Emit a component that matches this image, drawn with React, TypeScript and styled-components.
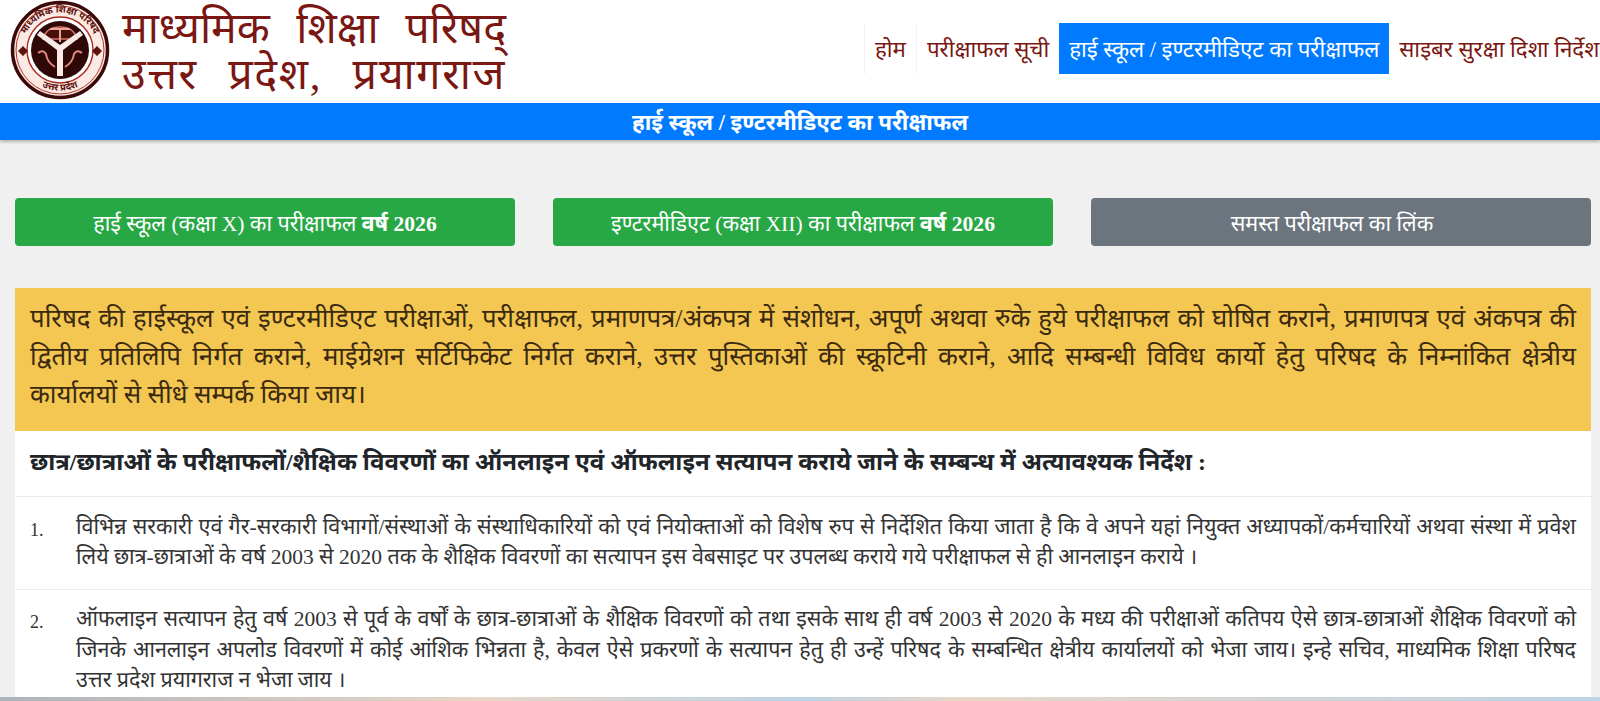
import React from "react";
import styled, { createGlobalStyle } from "styled-components";

const Global = createGlobalStyle`
  html, body { margin: 0; padding: 0; height: 701px; overflow: hidden; background: #f0f0f0; }
  body { font-family: "Liberation Serif", "Noto Sans", "DejaVu Sans", serif; color: #212529; }
  * { box-sizing: border-box; }
`;

const Header = styled.header`
  height: 103px; background: #fff; display: flex; overflow: hidden;
`;
const Brand = styled.div`
  flex: 0 0 864px; display: flex; align-items: flex-start; padding: 0 0 0 10px; gap: 12px;
`;
const BrandText = styled.div`
  color: #7a1712; font-size: 43px; line-height: 46px; padding-top: 6px; width: 384px;
`;
const BrandLine = styled.div<{ $wide?: boolean }>`
  height: 1lh; white-space: nowrap; text-align: justify; text-align-last: justify;
  letter-spacing: ${(p) => (p.$wide ? "1.6px" : "0")};
`;
const Nav = styled.nav`
  flex: none; display: flex; align-items: flex-start; padding-top: 23px; white-space: nowrap;
`;
const NavItem = styled.a<{ $active?: boolean; $divider?: boolean }>`
  display: flex; align-items: center; height: 51px; padding: 0 10px; font-size: 22.3px;
  color: ${(p) => (p.$active ? "#fff" : "#7a1712")};
  background: ${(p) => (p.$active ? "#007bff" : "transparent")};
  border-left: ${(p) => (p.$divider ? "1px solid #f2f2f2" : "none")};
`;
const TitleBar = styled.div`
  height: 37px; background: #007bff; color: #fff; font-weight: 700; font-size: 22.4px;
  display: flex; align-items: center; justify-content: center; box-shadow: 0 2px 3px rgba(0,0,0,.25);
`;
const Buttons = styled.div`
  display: grid; grid-template-columns: repeat(3, 1fr); gap: 38px; padding: 58px 9px 0 15px;
`;
const LinkButton = styled.a<{ $grey?: boolean }>`
  height: 48px; border-radius: 4px; color: #fff; font-size: 21.6px;
  display: flex; align-items: center; justify-content: center; gap: 5px;
  padding-right: ${(p) => (p.$grey ? "18px" : "0")};
  background: ${(p) => (p.$grey ? "#6c757d" : "#28a745")};
`;
const Card = styled.section`
  margin: 42px 9px 0 15px; background: #fff;
`;
const Notice = styled.div`
  background: #f3c752; padding: 12px 15px 0; height: 143px; font-size: 25.8px; line-height: 38px; color: #3b2a10;
`;
const FullLine = styled.span`
  display: block; height: 1lh; white-space: nowrap; text-align: justify; text-align-last: justify;
`;
const LastLine = styled.span`
  display: block; height: 1lh; white-space: nowrap;
`;
const Heading = styled.div`
  padding: 0 15px 6px; height: 65px; display: flex; align-items: center; font-weight: 700; font-size: 24px; color: #212529; white-space: nowrap;
`;
const Item = styled.div`
  display: grid; grid-template-columns: 46px 1fr; padding: 14.5px 15px 16px; border-top: 1px solid #e9ecef;
  font-size: 21.5px; line-height: 30.5px; color: #333;
`;
const Num = styled.span`
  font-size: 18px; padding-top: 3px;
`;
const BottomStrip = styled.div`
  position: fixed; left: 0; right: 0; bottom: 0; height: 4px;
  background: linear-gradient(90deg, #aeb4bb, #e8d6c6 30%, #bcd4e6 50%, #e8d6c6 60%, #bcd4e6 100%);
`;

function Emblem() {
  return (
    <svg width="100" height="100" viewBox="0 0 100 100" aria-hidden="true">
      <circle cx="50" cy="50" r="47.5" fill="#fbe9e4" stroke="#3a0b08" strokeWidth="3.5" />
      <circle cx="50" cy="50" r="44" fill="none" stroke="#b5352c" strokeWidth="1" />
      <circle cx="50" cy="50" r="33" fill="#fff" stroke="#a8291f" strokeWidth="1.4" />
      <circle cx="50" cy="50" r="29" fill="#2f0907" />
      <path d="M33 39 Q36 27 50 27 Q64 27 67 39 Z" fill="#4a100c" stroke="#d9756b" strokeWidth="1.5" />
      <path d="M40 29 H60 M50 28 V42" fill="none" stroke="#e8a59c" strokeWidth="2" />
      <path d="M27 35 L47 50 L47 76 L53 76 L53 50 L73 35 L70 31 L50 45 L30 31 Z" fill="#f8ebe7" />
      <path d="M28 53 q5 -4 8 1 q1 8 9 13 M72 53 q-5 -4 -8 1 q-1 8 -9 13" fill="none" stroke="#e08a80" strokeWidth="2" />
      <path d="M8 51 l5 -5 l5 5 l-5 5 Z M82 51 l5 -5 l5 5 l-5 5 Z" fill="#5e120e" />
      <path id="arcTop" d="M13 42 A38 38 0 0 1 87 42" fill="none" />
      <text fontSize="9.5" fontWeight="700" fill="#5e120e"><textPath href="#arcTop" startOffset="50%" textAnchor="middle">माध्यमिक शिक्षा परिषद</textPath></text>
      <path id="arcBot" d="M22 80 A42 42 0 0 0 78 80" fill="none" />
      <text fontSize="9.5" fontWeight="700" fill="#5e120e"><textPath href="#arcBot" startOffset="50%" textAnchor="middle">उत्तर प्रदेश</textPath></text>
    </svg>
  );
}

export default function App() {
  return (
    <>
      <Global />
      <Header>
        <Brand>
          <Emblem />
          <BrandText>
            <BrandLine>माध्यमिक शिक्षा परिषद्</BrandLine>
            <BrandLine $wide>उत्तर प्रदेश, प्रयागराज</BrandLine>
          </BrandText>
        </Brand>
        <Nav>
          <NavItem $divider>होम</NavItem>
          <NavItem $divider>परीक्षाफल सूची</NavItem>
          <NavItem $active>हाई स्कूल / इण्टरमीडिएट का परीक्षाफल</NavItem>
          <NavItem>साइबर सुरक्षा दिशा निर्देश</NavItem>
        </Nav>
      </Header>
      <TitleBar>हाई स्कूल / इण्टरमीडिएट का परीक्षाफल</TitleBar>
      <Buttons>
        <LinkButton>हाई स्कूल (कक्षा X) का परीक्षाफल <b>वर्ष 2026</b></LinkButton>
        <LinkButton>इण्टरमीडिएट (कक्षा XII) का परीक्षाफल <b>वर्ष 2026</b></LinkButton>
        <LinkButton $grey>समस्त परीक्षाफल का लिंक</LinkButton>
      </Buttons>
      <Card>
        <Notice>
          <FullLine>परिषद की हाईस्कूल एवं इण्टरमीडिएट परीक्षाओं, परीक्षाफल, प्रमाणपत्र/अंकपत्र में संशोधन, अपूर्ण अथवा रुके हुये परीक्षाफल को घोषित कराने, प्रमाणपत्र एवं अंकपत्र की</FullLine>
          <FullLine>द्वितीय प्रतिलिपि निर्गत कराने, माईग्रेशन सर्टिफिकेट निर्गत कराने, उत्तर पुस्तिकाओं की स्क्रूटिनी कराने, आदि सम्बन्धी विविध कार्यो हेतु परिषद के निम्नांकित क्षेत्रीय</FullLine>
          <LastLine>कार्यालयों से सीधे सम्पर्क किया जाय।</LastLine>
        </Notice>
        <Heading>छात्र/छात्राओं के परीक्षाफलों/शैक्षिक विवरणों का ऑनलाइन एवं ऑफलाइन सत्यापन कराये जाने के सम्बन्ध में अत्यावश्यक निर्देश :</Heading>
        <Item>
          <Num>1.</Num>
          <div>
            <FullLine>विभिन्न सरकारी एवं गैर-सरकारी विभागों/संस्थाओं के संस्थाधिकारियों को एवं नियोक्ताओं को विशेष रुप से निर्देशित किया जाता है कि वे अपने यहां नियुक्त अध्यापकों/कर्मचारियों अथवा संस्था में प्रवेश</FullLine>
            <LastLine>लिये छात्र-छात्राओं के वर्ष 2003 से 2020 तक के शैक्षिक विवरणों का सत्यापन इस वेबसाइट पर उपलब्ध कराये गये परीक्षाफल से ही आनलाइन कराये ।</LastLine>
          </div>
        </Item>
        <Item>
          <Num>2.</Num>
          <div>
            <FullLine>ऑफलाइन सत्यापन हेतु वर्ष 2003 से पूर्व के वर्षों के छात्र-छात्राओं के शैक्षिक विवरणों को तथा इसके साथ ही वर्ष 2003 से 2020 के मध्य की परीक्षाओं कतिपय ऐसे छात्र-छात्राओं शैक्षिक विवरणों को</FullLine>
            <FullLine>जिनके आनलाइन अपलोड विवरणों में कोई आंशिक भिन्नता है, केवल ऐसे प्रकरणों के सत्यापन हेतु ही उन्हें परिषद के सम्बन्धित क्षेत्रीय कार्यालयों को भेजा जाय। इन्हे सचिव, माध्यमिक शिक्षा परिषद</FullLine>
            <LastLine>उत्तर प्रदेश प्रयागराज न भेजा जाय ।</LastLine>
          </div>
        </Item>
      </Card>
      <BottomStrip />
    </>
  );
}
